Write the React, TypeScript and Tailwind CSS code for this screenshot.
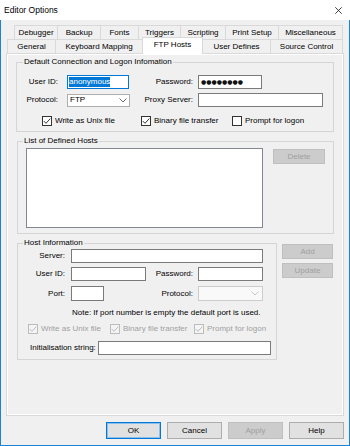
import React from "react";

function Check({ checked, disabled }: { checked: boolean; disabled?: boolean }) {
  const stroke = disabled ? "#bcbcbc" : "#333333";
  return (
    <svg width="10" height="10" viewBox="0 0 10 10" className="shrink-0">
      <rect x="0.5" y="0.5" width="9" height="9" fill={disabled ? "#f4f4f4" : "#ffffff"} stroke={stroke} />
      {checked && <path d="M1.8 5.1 L4 7.3 L8.3 2.6" fill="none" stroke={stroke} strokeWidth="1" />}
    </svg>
  );
}

function Chevron({ color }: { color: string }) {
  return (
    <svg width="8" height="5" viewBox="0 0 8 5" className="shrink-0">
      <path d="M0.5 0.5 L4 4 L7.5 0.5" fill="none" stroke={color} strokeWidth="0.8" />
    </svg>
  );
}

const tabBase = "flex items-center justify-center border-t border-l border-[#d9d9d9] bg-[#f0f0f0] whitespace-nowrap";

export default function App() {
  return (
    <div className="w-[350px] h-[446px] flex flex-col bg-[#f0f0f0] font-['Liberation_Sans',Arial,sans-serif] text-[8px] leading-[10px] text-black overflow-hidden">
      {/* title bar */}
      <div className="h-[20px] shrink-0 bg-white flex items-center justify-between pl-[4px] pr-[8px]">
        <span className="text-[8.5px]">Editor Options</span>
        <svg width="7" height="7" viewBox="0 0 7 7">
          <path d="M0.3 0.3 L6.7 6.7 M6.7 0.3 L0.3 6.7" stroke="#111" strokeWidth="0.8" />
        </svg>
      </div>

      <div className="flex-1 flex flex-col border-x border-b border-[#1883d7]">
        {/* tabs */}
        <div className="pt-[4px]">
          <div className="flex ml-[13px] h-[15px] pt-[1px]">
            <div className={`${tabBase} w-[43px]`}>Debugger</div>
            <div className={`${tabBase} w-[43px]`}>Backup</div>
            <div className={`${tabBase} w-[38px]`}>Fonts</div>
            <div className={`${tabBase} w-[42px]`}>Triggers</div>
            <div className={`${tabBase} w-[45px]`}>Scripting</div>
            <div className={`${tabBase} w-[53px]`}>Print Setup</div>
            <div className={`${tabBase} w-[65px] border-r`}>Miscellaneous</div>
          </div>
          <div className="flex ml-[6px] h-[14px]">
            <div className={`${tabBase} w-[48px]`}>General</div>
            <div className={`${tabBase} w-[87px]`}>Keyboard Mapping</div>
            <div className="relative -top-[2px] z-10 h-[17px] w-[61px] flex items-center justify-center bg-white border-t border-x border-[#d9d9d9] pb-[2px]">
              FTP Hosts
            </div>
            <div className="flex items-center justify-center border-t border-[#d9d9d9] bg-[#f0f0f0] w-[67px]">User Defines</div>
            <div className={`${tabBase} w-[73px] border-r`}>Source Control</div>
          </div>
        </div>

        {/* panel */}
        <div className="ml-[5px] w-[338px] h-[363px] border border-[#d9d9d9] bg-white p-[1px]">
          <div className="h-full bg-[#f0f0f0] flex flex-col">
            {/* Default connection */}
            <fieldset className="ml-[8px] mt-[2px] w-[318px] h-[75px] border border-[#d5d5d5]">
              <legend className="ml-[6px] px-[1px]">Default Connection and Logon Infomation</legend>
              <div className="flex items-center h-[14px] mt-[8px]">
                <div className="w-[41px] text-right">User ID:</div>
                <div className="ml-[9px] w-[62px] h-[14px] bg-white border border-[#0078d7] flex items-center pl-[1px]">
                  <span className="bg-[#0078d7] text-white leading-[10px]">anonymous</span>
                </div>
                <div className="w-[64px] text-right">Password:</div>
                <div className="ml-[5px] w-[64px] h-[14px] bg-white border border-[#7a7a7a] flex items-center pl-[2px] overflow-hidden">
                  <span className="text-[6px] leading-[8px] font-['DejaVu_Sans',sans-serif] text-[#111]">●●●●●●●●</span>
                </div>
              </div>
              <div className="flex items-center h-[14px] mt-[4px]">
                <div className="w-[41px] text-right">Protocol:</div>
                <div className="ml-[9px] w-[63px] h-[13px] bg-white border border-[#adadad] flex items-center justify-between pl-[2px] pr-[2px]">
                  <span>FTP</span>
                  <Chevron color="#444" />
                </div>
                <div className="w-[63px] text-right">Proxy Server:</div>
                <div className="ml-[5px] w-[125px] h-[14px] bg-white border border-[#7a7a7a]" />
              </div>
              <div className="flex items-center h-[10px] mt-[9px] ml-[25px]">
                <div className="w-[99px] flex items-center gap-[3px]">
                  <Check checked />
                  <span>Write as Unix file</span>
                </div>
                <div className="w-[91px] flex items-center gap-[3px]">
                  <Check checked />
                  <span>Binary file transfer</span>
                </div>
                <div className="flex items-center gap-[3px]">
                  <Check checked={false} />
                  <span>Prompt for logon</span>
                </div>
              </div>
            </fieldset>

            {/* List of defined hosts */}
            <fieldset className="ml-[9px] mt-[4px] w-[317px] h-[98px] border border-[#d5d5d5]">
              <legend className="ml-[5px] px-[1px]">List of Defined Hosts</legend>
              <div className="flex items-start mt-[2px]">
                <div className="ml-[8px] w-[237px] h-[80px] bg-white border border-[#828790]" />
                <div className="ml-[10px] mt-[1px] w-[52px] h-[15px] bg-[#cccccc] border border-[#bfbfbf] text-[#a0a0a0] flex items-center justify-center">
                  Delete
                </div>
              </div>
            </fieldset>

            {/* Host info + buttons */}
            <div className="flex items-start mt-[4px]">
              <fieldset className="ml-[9px] w-[260px] h-[122px] border border-[#d5d5d5]">
                <legend className="ml-[5px] px-[1px]">Host Information</legend>
                <div className="flex items-center h-[14px] mt-[1px]">
                  <div className="w-[47px] text-right">Server:</div>
                  <div className="ml-[6px] w-[192px] h-[14px] bg-white border border-[#7a7a7a]" />
                </div>
                <div className="flex items-center h-[14px] mt-[4px]">
                  <div className="w-[47px] text-right">User ID:</div>
                  <div className="ml-[6px] w-[75px] h-[14px] bg-white border border-[#7a7a7a]" />
                  <div className="w-[47px] text-right">Password:</div>
                  <div className="ml-[5px] w-[65px] h-[14px] bg-white border border-[#7a7a7a]" />
                </div>
                <div className="flex items-center h-[15px] mt-[5px]">
                  <div className="w-[47px] text-right">Port:</div>
                  <div className="ml-[6px] w-[33px] h-[15px] bg-white border border-[#7a7a7a]" />
                  <div className="w-[89px] text-right">Protocol:</div>
                  <div className="ml-[5px] w-[65px] h-[15px] bg-[#f9f9f9] border border-[#cccccc] flex items-center justify-end pr-[3px]">
                    <Chevron color="#bbbbbb" />
                  </div>
                </div>
                <div className="mt-[7px] ml-[54px] whitespace-nowrap">Note: If port number is empty the default port is used.</div>
                <div className="flex items-center h-[10px] mt-[6px] ml-[10px] text-[#a0a0a0]">
                  <div className="w-[82px] flex items-center gap-[3px]">
                    <Check checked disabled />
                    <span>Write as Unix file</span>
                  </div>
                  <div className="w-[84px] flex items-center gap-[3px]">
                    <Check checked disabled />
                    <span>Binary file transfer</span>
                  </div>
                  <div className="flex items-center gap-[3px]">
                    <Check checked disabled />
                    <span>Prompt for logon</span>
                  </div>
                </div>
                <div className="flex items-center h-[14px] mt-[7px] ml-[12px]">
                  <div className="whitespace-nowrap">Initialisation string:</div>
                  <div className="ml-[2px] w-[173px] h-[14px] bg-white border border-[#7a7a7a]" />
                </div>
              </fieldset>
              <div className="ml-[5px] mt-[6px] flex flex-col gap-[4px]">
                <div className="w-[51px] h-[15px] bg-[#cccccc] border border-[#bfbfbf] text-[#a0a0a0] flex items-center justify-center">Add</div>
                <div className="w-[51px] h-[15px] bg-[#cccccc] border border-[#bfbfbf] text-[#a0a0a0] flex items-center justify-center">Update</div>
              </div>
            </div>
          </div>
        </div>

        {/* bottom buttons */}
        <div className="flex justify-end gap-[6px] pr-[5px] mt-[6px]">
          <div className="w-[55px] h-[17px] bg-[#e1e1e1] border border-[#0078d7] shadow-[inset_0_0_0_1px_#8cbfea] flex items-center justify-center">OK</div>
          <div className="w-[55px] h-[17px] bg-[#e1e1e1] border border-[#adadad] flex items-center justify-center">Cancel</div>
          <div className="w-[55px] h-[17px] bg-[#cccccc] border border-[#bfbfbf] text-[#a0a0a0] flex items-center justify-center">Apply</div>
          <div className="w-[55px] h-[17px] bg-[#e1e1e1] border border-[#adadad] flex items-center justify-center">Help</div>
        </div>
      </div>
    </div>
  );
}
